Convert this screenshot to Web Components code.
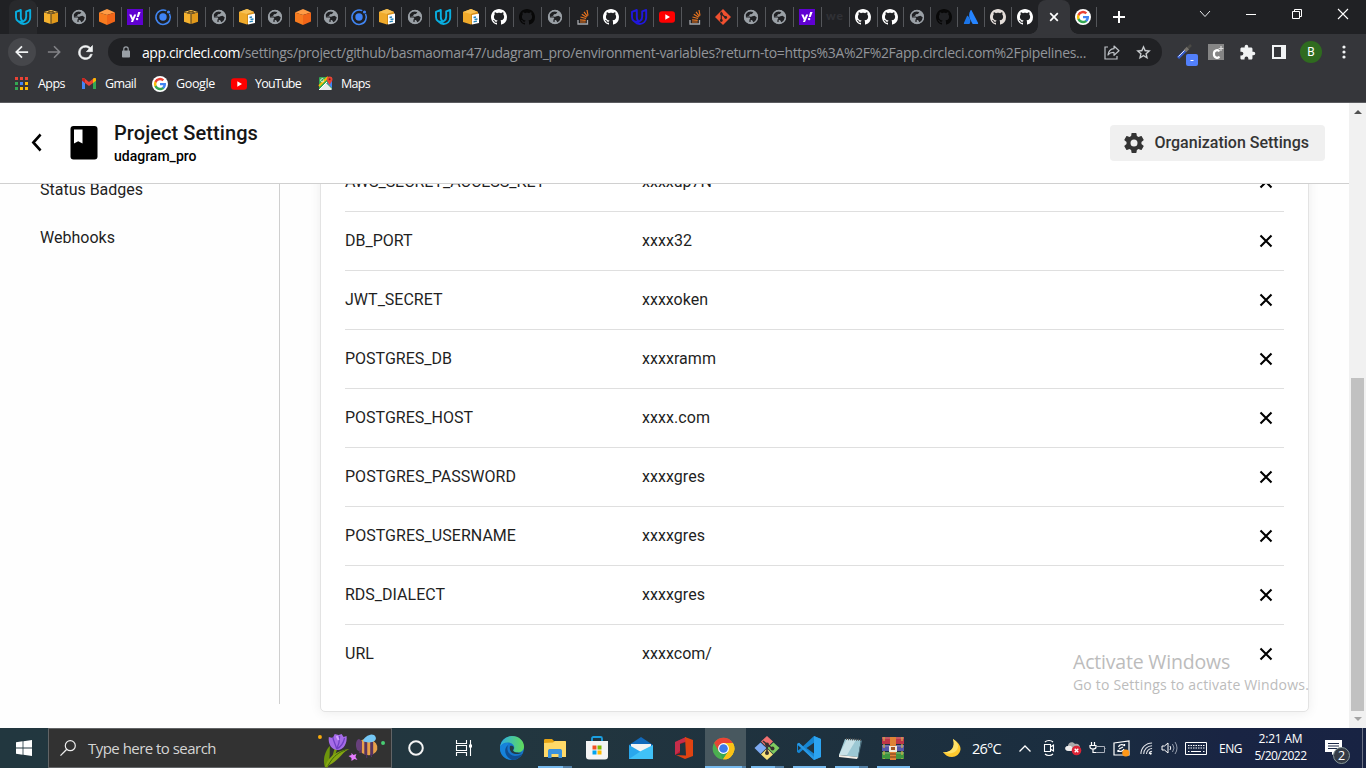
<!DOCTYPE html>
<html lang="en">
<head>
<meta charset="utf-8">
<title>Project Settings - udagram_pro</title>
<style>
html,body{margin:0;height:100%;overflow:hidden;background:#fff}
body{font-family:"Open Sans","Noto Sans",sans-serif}
</style>
</head>
<body>
<desktop-screen></desktop-screen>
<script>
const GH='<path d="M8 0C3.58 0 0 3.58 0 8c0 3.54 2.29 6.53 5.47 7.59.4.07.55-.17.55-.38 0-.19-.01-.82-.01-1.49-2.01.37-2.53-.49-2.69-.94-.09-.23-.48-.94-.82-1.13-.28-.15-.68-.52-.01-.53.63-.01 1.08.58 1.23.82.72 1.21 1.87.87 2.33.66.07-.52.28-.87.51-1.07-1.78-.2-3.64-.89-3.64-3.95 0-.87.31-1.59.82-2.15-.08-.2-.36-1.02.08-2.12 0 0 .67-.21 2.2.82.64-.18 1.32-.27 2-.27s1.36.09 2 .27c1.53-1.04 2.2-.82 2.2-.82.44 1.1.16 1.92.08 2.12.51.56.82 1.27.82 2.15 0 3.07-1.87 3.75-3.65 3.95.29.25.54.73.54 1.48 0 1.07-.01 1.93-.01 2.2 0 .21.15.46.55.38A8.01 8.01 0 0 0 16 8c0-4.42-3.58-8-8-8z" fill="';
const U=c=>`<g fill="none" stroke="${c}" stroke-width="1.9" stroke-linejoin="round"><path d="M1 2.800 5.800 1v7c0 2.300.6 3.700 2.200 4.700C3.500 13.500 1 11.500 1 8z"/><path d="M11.200 2.300 15.200 1v7.500c0 3.800-2.900 6.400-6.700 6.500-2 0-3.500-.7-4.600-2.200 4.500.3 7.300-1.400 7.300-5z"/></g>`;
const G='<path d="M15.500 8.200c0-.6 0-1-.1-1.500H8v2.900h4.200a3.700 3.700 0 0 1-1.600 2.400v2H13c1.600-1.400 2.500-3.500 2.500-5.800z" fill="#4285f4"/><path d="M8 15.800c2.100 0 3.900-.7 5.100-1.900l-2.500-1.900c-.7.5-1.500.7-2.600.7-2 0-3.700-1.300-4.300-3.200H1.100v2A7.800 7.800 0 0 0 8 15.800z" fill="#34a853"/><path d="M3.700 9.500a4.700 4.700 0 0 1 0-3v-2H1.100a7.800 7.800 0 0 0 0 7z" fill="#fbbc05"/><path d="M8 3.300c1.200 0 2.200.4 3 1.200l2.200-2.200A7.800 7.800 0 0 0 1.100 4.500l2.600 2C4.300 4.600 6 3.300 8 3.300z" fill="#ea4335"/>';
const CUBE='<path d="M1 3 8 1l7 2-7 1.500z" fill="#ffc857"/><path d="M1 3.400 7.600 5v10L1 12.700z" fill="#f5b22f"/><path d="M8.400 5 15 3.400v9.300L8.400 15z" fill="#e29a1c"/><path d="M5 2l7 2M11 2 4 4" stroke="#694a14"/>';
const I={
udacity:['16 16',U('#08aee0')],udablue:['16 16',U('#2017dd')],
aws:['16 16',CUBE],
awsdoc:['16 16','<path d="M0 3 8 0l7 3v4H8v8.500L0 13z" fill="#f0aa2b"/><path d="M0 3 8 0l7 3-7 2z" fill="#f7c155"/><path d="M8 5l7-2v10l-7 2.500z" fill="#d68f1b"/><path d="M9 6l7-1.500V14l-7 1.500z" fill="#fff"/><path d="M10.500 8.500l2.500-.5M11.500 10.500l3-.5M10.500 12.800l3.500-.6" stroke="#2684b8" stroke-width="1.300"/>'],
globe:['16 16','<circle cx="8" cy="8" r="7" fill="#9aa0a6"/><path d="M7 2.200 10.400 3 9 5 7 5.200 6 7 3 8 2.500 5.200 4.800 3z M8.500 7.500l3-.7 2.500 1.700-1 3-2.500 2-1.500-2.600-2.500-.4z" fill="#202124"/><path d="M3 8h4l2 2-2 1v2" stroke="#202124" stroke-width="1.200" fill="none"/><circle cx="8" cy="8" r="6.500" fill="none" stroke="#9aa0a6" stroke-width="1.300"/>'],
orange:['16 16','<path d="M0 3.500 8 0l8 3.500L8 6z" fill="#ff9b45"/><path d="M0 3.500 8 6v10l-8-3.500z" fill="#f77b1f"/><path d="M16 3.500 8 6v10l8-3.500z" fill="#f16518"/>'],
yahoo:['16 16','<path d="M0 0h16v16H0z" fill="#6001d2"/><path d="M2.200 5.500h2.200l1.400 3.200 1.300-3.200h2.200L6 13H3.900l.9-2z M11.200 3h2.400l-1.900 5h-2z" fill="#fff"/><circle cx="10.100" cy="10" r="1.200" fill="#fff"/>'],
ionic:['16 16','<circle cx="8" cy="8" r="3.700" fill="#3f83f6"/><path d="M11.300 1.700a7.200 7.200 0 1 0 3.200 3.100" fill="none" stroke="#4186f3" stroke-width="1.500"/><circle cx="13.500" cy="3" r="1.600" fill="#3f83f6"/>'],
github:['16 16',GH+'#fff"/>'],ghblack:['16 16',GH+'#080808"/>'],ghtan:['16 16',GH+'#e4ddd9"/>'],
so:['16 16','<path d="M3 11v4h9.500v-4" fill="none" stroke="#a7a9ad" stroke-width="1.300"/><path d="M5 13h5.700M5 10.800l5.700.5M5.500 8l5.500 1.500M6.800 5.300l4.800 2.900M9 2.800l3.400 4.500M12 1l1 5.500" stroke="#e8741f" stroke-width="1.200"/>'],
youtube:['16 16','<rect y="2.300" width="16" height="11.400" rx="3" fill="#f00"/><path d="M6.300 5.300 11 8l-4.700 2.700z" fill="#fff"/>'],
git:['16 16','<path d="M8 0l8 8-8 8-8-8z" fill="#f0502f"/><path d="M6.300 2.800v9M6.500 5l4 3.500" stroke="#2b2424" stroke-width="1.200"/><circle cx="6.300" cy="11.500" r="1.400" fill="#2b2424"/><circle cx="10.700" cy="8.500" r="1.400" fill="#2b2424"/><circle cx="6.500" cy="5" r="1.400" fill="#2b2424"/>'],
we:['16 16','<text x="-1" y="11" font-family="Lato" font-weight="900" font-size="12" fill="#303136" textLength="17">we</text>'],
atlassian:['16 16','<path d="M5 7c-.3-.4-.8-.3-1 .1L.9 14c-.2.500.1 1 .6 1h4.700c.3 0 .5-.1.600-.4C8 12.200 7.300 9 5 7z" fill="#1b75e8"/><path d="M7.600 1.300C5.700 4.300 5.800 7.600 7 10l2.300 4.600c.1.300.4.400.7.400h4.500c.500 0 .8-.5.600-1L8.500 1.300c-.2-.4-.7-.4-.9 0z" fill="#2684ff"/>'],
google:['16 16','<circle cx="8" cy="8" r="8" fill="#fff"/><g transform="translate(1.600 1.600) scale(.8)">'+G+'</g>'],
back:['16 16','<path d="M15 8H2M8 1.500 1.500 8 8 14.500" fill="none" stroke="#f1f3f4" stroke-width="2"/>'],
forward:['16 16','<path d="M1 8h13M8 1.500 14.500 8 8 14.500" fill="none" stroke="#828387" stroke-width="1.800"/>'],
reload:['24 24','<path d="M17.650 6.350A7.960 7.960 0 0 0 12 4a8 8 0 1 0 7.730 10h-2.080A6 6 0 1 1 12 6c1.660 0 3.140.69 4.220 1.780L13 11h7V4z" fill="#f1f3f4" stroke="#f1f3f4" stroke-width=".7"/>'],
lock:['10 12','<rect x="1" y="4.500" width="8" height="7" rx=".8" fill="#9aa0a6"/><path d="M2.800 5V3a2.200 2.200 0 0 1 4.400 0v2" fill="none" stroke="#9aa0a6" stroke-width="1.200"/>'],
share:['16 16','<path d="M4 3H1v12h12v-3" fill="none" stroke="#bdc1c6" stroke-width="1.200"/><path d="M4 11c.5-4 2.500-6 6-6.300V2l5 4.800-5 4.500V8.500C7.500 8.300 5.500 9 4 11z" fill="none" stroke="#bdc1c6" stroke-width="1.200" stroke-linejoin="round"/>'],
star:['24 24','<path d="M22 9.240l-7.190-.62L12 2 9.190 8.630 2 9.240l5.460 4.730L5.820 21 12 17.270 18.180 21l-1.630-7.030zM12 15.400l-3.760 2.270 1-4.280-3.320-2.880 4.380-.38L12 6.100l1.710 4.040 4.380.38-3.320 2.880 1 4.280z" fill="#d0d3d6" stroke="#d0d3d6" stroke-width=".3"/>'],
pick:['22 22','<path d="M2 14 10 6" stroke="#355dd0" stroke-width="3"/><path d="M2.500 12.500 9 6" stroke="#e4e8f4"/><path d="M9 7l3-3" stroke="#77736c" stroke-width="3.400"/><path d="M12 4l3-3" stroke="#4b4a46" stroke-width="2.500"/><rect x="10" y="10" width="12" height="12" rx="2" fill="#5280fb"/><path d="M14.500 16.500h3" stroke="#fff"/>'],
cext:['16 16','<path d="M0 0h16v16H0z" fill="#858585"/><path d="M11.200 7.400C10.200 5.500 5.900 5.800 5.900 10s4.300 4.600 5.400 2.500" fill="none" stroke="#fff" stroke-width="2.200"/><path d="M13 2v5M10.600 4.500h4.800" stroke="#ddd" stroke-width="1.200"/>'],
puzzle:['24 24','<path d="M20.500 11H19V7c0-1.100-.9-2-2-2h-4V3.500a2.500 2.500 0 0 0-5 0V5H4c-1.100 0-2 .9-2 2v3.800h1.500a2.700 2.700 0 0 1 0 5.400H2V20c0 1.100.9 2 2 2h3.800v-1.500a2.700 2.700 0 0 1 5.400 0V22H17c1.100 0 2-.9 2-2v-4h1.500a2.500 2.500 0 0 0 0-5z" fill="#f1f3f4"/>'],
panel:['14 14','<path d="M1 1h12v12H1z" fill="#35363a" stroke="#f1f3f4" stroke-width="2"/><path d="M9 1h4v12H9z" fill="#f1f3f4"/>'],
dots:['4 16','<circle cx="2" cy="3" r="1.600" fill="#f1f3f4"/><circle cx="2" cy="8" r="1.600" fill="#f1f3f4"/><circle cx="2" cy="13" r="1.600" fill="#f1f3f4"/>'],
close:['10 10','<path d="M1.200 1.200l7.600 7.600M8.800 1.200 1.200 8.800" stroke="#fff" stroke-width="1.700"/>'],
plus:['12 12','<path d="M6 0v12M0 6h12" stroke="#fff" stroke-width="2"/>'],
down:['12 8','<path d="M1 1l5 5.500L11 1" fill="none" stroke="#e8eaed"/>'],
min:['10 10','<path d="M0 5.500h10" stroke="#fff"/>'],
restore:['10 10','<path d="M.5 2.500h7v7h-7zM2.500 2.500v-2h7v7h-2" fill="none" stroke="#fff"/>'],
wclose:['10 10','<path d="M0 0l10 10M10 0 0 10" stroke="#fff" stroke-width="1.100"/>'],
apps:['13 13','<g><path d="M0 0h3v3H0zM5 0h3v3H5zM10 0h3v3h-3z" fill="#ea4335"/><path d="M0 5h3v3H0z" fill="#34a853"/><path d="M5 5h3v3H5z" fill="#4285f4"/><path d="M10 5h3v3h-3z" fill="#fbbc04"/><path d="M0 10h3v3H0z" fill="#34a853"/><path d="M5 10h3v3H5zM10 10h3v3h-3z" fill="#fbbc04"/></g>'],
gmail:['14 11','<path d="M0 1.500V11h3V4.500z" fill="#4285f4"/><path d="M14 1.500V11h-3V4.500z" fill="#34a853"/><path d="M0 1.500C0 0 1.500-.3 2.600.5L7 4 11.400.5C12.500-.3 14 0 14 1.500L11 5 7 8 3 5z" fill="#ea4335"/><path d="M11 1l.4-.5C12.500-.3 14 0 14 1.500v1.300L11 5z" fill="#fbbc04"/><path d="M0 1.500V2.800L3 5V.8C1.500-.3 0 .3 0 1.500z" fill="#c5221f"/>'],
maps:['15 15','<rect x="1" y="1" width="13" height="13" rx="1" fill="#34a853"/><path d="M1 14 8 7l6 6-1 1z" fill="#e9eaec"/><path d="M9 7l5-4v9z" fill="#4285f4"/><path d="M1 10 10 1" stroke="#fbbc04" stroke-width="1.800"/><path d="M1 14 9 6" stroke="#fff"/><path d="M5.600 3.300a1.600 1.600 0 1 0 .1 1.700H4.500" fill="none" stroke="#fff" stroke-width=".8"/><path d="M11.500 9C10.500 6.700 8.700 5.500 8.700 3.300a2.900 2.900 0 0 1 5.800 0C14.500 5.500 12.500 6.700 11.500 9z" fill="#ea4335"/><circle cx="11.600" cy="3.300" r="1" fill="#811c14"/>'],
chev:['12 18','<path d="M10 1.500 2.500 9l7.500 7.500" fill="none" stroke="#000" stroke-width="2.700"/>'],
book:['28 34','<rect x=".5" width="27" height="33.500" rx="3" fill="#000"/><path d="M4 3.500h8.500V17.500L8.200 15.200 4 17.500z" fill="#fff"/>'],
gear:['24 24','<path d="M19.430 12.980c.04-.32.07-.64.07-.98s-.03-.66-.07-.98l2.110-1.650c.19-.15.24-.42.12-.64l-2-3.460c-.12-.22-.39-.3-.61-.22l-2.490 1c-.52-.4-1.080-.73-1.690-.98l-.38-2.650A.49.490 0 0 0 14 2h-4c-.25 0-.46.18-.49.42l-.38 2.650c-.61.25-1.170.59-1.690.98l-2.490-1c-.23-.09-.49 0-.61.22l-2 3.460c-.13.22-.07.49.12.64l2.110 1.650c-.04.32-.07.65-.07.98s.03.66.07.98l-2.110 1.650c-.19.15-.24.42-.12.64l2 3.460c.12.22.39.3.61.22l2.490-1c.52.4 1.080.73 1.690.98l.38 2.650c.03.24.24.42.49.42h4c.25 0 .46-.18.49-.42l.38-2.650c.61-.25 1.170-.59 1.690-.98l2.490 1c.23.09.49 0 .61-.22l2-3.460c.12-.22.07-.49-.12-.64zM12 15.500a3.500 3.500 0 1 1 0-7 3.500 3.500 0 0 1 0 7z" fill="#343434"/>'],
x:['14 14','<path d="M1.500 1.500l11 11M12.500 1.500l-11 11" stroke="#000" stroke-width="2.100"/>'],
win:['16 16','<path d="M0 2.200 6.600 1.300V7.600H0zM7.400 1.200 16 0v7.600H7.400zM0 8.400h6.600v6.300L0 13.800zM7.400 8.400H16V16l-8.600-1.200z" fill="#fff"/>'],
search:['16 16','<circle cx="10.300" cy="5.700" r="5" fill="none" stroke="#eee" stroke-width="1.200"/><path d="M6.800 9.300.5 15.600" stroke="#eee" stroke-width="1.300"/>'],
flower:['70 34','<circle cx="4" cy="4" r="2" fill="#faab0b"/><path d="M10 34C18 26 20 19 21 10" stroke="#79980e" stroke-width="2.500" fill="none"/><path d="M9 34C6 24 11 16 14 13c0 9 0 14-3 21z" fill="#6d950c"/><path d="M9 34c3-9 10-16 25-18-7 2-12 14-25 18z" fill="#85a612"/><path d="M12 33C18 22 24 19 30 17" stroke="#3e6909" fill="none"/><path d="M13 4l4 1 2-4 4 1 3-1 2 3 3-1c1 7-3 14-9 14S12 11 13 4z" fill="#a56be8"/><path d="M17 4c1 5 3 8 4 12M24 3c0 6-1 9-3 13M29 5c-1 5-4 9-8 11" stroke="#7140c5" stroke-width="1.300" fill="none"/><path d="M21 3l2 4" stroke="#d2a3ff" stroke-width="2"/><path d="M36 20l2 2 3-1-1 3 2 3-3-1-3 2v-3l-3-2 3-1z" fill="#e67cff"/><g transform="translate(1.500 0)"><ellipse cx="51" cy="14" rx="10" ry="8" transform="rotate(15 51 14)" fill="#e7a04a"/><path d="M43.500 8v12M49 7v15M55 9v13" stroke="#57345f" stroke-width="3"/><ellipse cx="42" cy="12" rx="3" ry="6" fill="#67407b"/><path d="M46 8c1-4 10-10 13-4 2 5-7 7-13 4z" fill="#75c7f4"/><path d="M50 22v3M54 21l1 3" stroke="#52306f"/></g><circle cx="68" cy="10" r="2" fill="#48cd73"/>'],
cortana:['18 18','<circle cx="9" cy="9" r="6.800" fill="none" stroke="#f4f4f4" stroke-width="2"/>'],
taskview:['16 16','<path d="M.5 0v3.500h10V0M.5 16v-3.500h10V16M.5 5.500h10v5H.5zM14.500 0v16" fill="none" stroke="#fff" stroke-width="1.100"/><path d="M13 4.500h3v3h-3z" fill="#fff"/>'],
edge:['24 24','<defs><linearGradient id="e1" x1="0" x2="1"><stop stop-color="#2daee6"/><stop offset="1" stop-color="#61dc58"/></linearGradient></defs><circle cx="12" cy="12" r="12" fill="#1676ce"/><path d="M0 11C1 4 6 0 12 0c7 0 12 5 12 10.500 0 4-3 6-7 6-3 0-4.500-1-3.500-2.500C16 10 12 6.500 8 6.500 4 6.500 1 8.500 0 11z" fill="url(#e1)"/><path d="M8 9c-5 4-3 12 4.500 15C5 24 0 19 0 12 1 8 5 6.500 8.500 7z" fill="#1683db"/><path d="M8 9c-2 5 1 11 7 11 3 0 5-.8 7.300-2C20 22 16 24 12 24 5 21 3 13 8 9z" fill="#104e91"/><path d="M10 10c-1 4 1 8 6 8 3 0 5-.8 6.600-1.600C21 17 13 17 13 14c2-2 .5-5-3-4z" fill="#243c43"/>'],
explorer:['22 19','<path d="M0 1c0-1 1-1 2-1h6l2 2h12v16H0z" fill="#e6a313"/><path d="M0 4l9-.5L11 2h10l1 1v15H0z" fill="#ffd968"/><path d="M4 19v-7c0-1.500 1-2 2-2h10c1 0 2 .5 2 2v7h-3.500v-4h-7v4z" fill="#3a92dd"/>'],
store:['24 24','<path d="M7 6V2.500C7 1.500 7.500 1 8.500 1h7c1 0 1.500.5 1.500 1.500V6" fill="none" stroke="#1b9fe0" stroke-width="1.800"/><path d="M1 5h22v15.500c0 2-1 3-3 3H4c-2 0-3-1-3-3z" fill="#f4f4f4"/><path d="M7.500 9.500h4v4h-4z" fill="#f25022"/><path d="M12.500 9.500h4v4h-4z" fill="#7fba00"/><path d="M7.500 14.500h4v4h-4z" fill="#00a4ef"/><path d="M12.500 14.500h4v4h-4z" fill="#ffb900"/>'],
mail:['24 22','<path d="M0 8 12 0l12 8v14H0z" fill="#1169bb"/><path d="M2 7h20v6l-10 5L2 13z" fill="#f3f3f3"/><path d="M0 8l24 14H0z" fill="#29a7ec"/><path d="M24 8v14H0l12-8z" fill="#40c1f7"/>'],
office:['18 22','<path d="M0 5 11 0v5L5 7v9l-5 2z" fill="#b51624"/><path d="M0 5 11 0l-.2 4.500L5 6.500V14L0 18z" fill="#d7436f" opacity=".5"/><path d="M10 0l8 3v16l-8 3-9-4 10 .500z" fill="#df4312"/>'],
chrome:['24 24','<circle cx="12" cy="12" r="11.300" fill="#4bae4f"/><path d="M12 12 2.200 6.350A11.300 11.300 0 0 1 21.800 6.350H12z" fill="#ea4335"/><path d="M12 6.350h9.800A11.300 11.300 0 0 1 11.500 23.300L17 15z" fill="#fbc116"/><path d="M2.200 6.350 7.100 14.800 12 12z" fill="#ea4335"/><path d="M7.100 14.800 12 17.700l5-2.900-5.500 8.500z" fill="#34a853"/><path d="M17 14.800 11.500 23.300A11.300 11.300 0 0 0 21.800 6.350H12z" fill="#fbc116"/><circle cx="12" cy="12" r="5.700" fill="#fff"/><circle cx="12" cy="12" r="4.500" fill="#3c79eb"/>'],
gitbash:['24 24','<path d="M12 0l6 5.500-6 6-6-6z" fill="#f07070"/><path d="M5.500 6.500l6 5.500-6 6-6-6z" fill="#7daaf2"/><path d="M18.500 6.500l6 5.500-6 6-6-6z" fill="#80cb60"/><path d="M12 12.500l6 6-6 5.500-6-5.500z" fill="#f6e17b"/><path d="M8 5l4 3.500v8M13 9l4 3.500" stroke="#37302e" stroke-width="1.600" fill="none"/><circle cx="12" cy="8.500" r="2" fill="#37302e"/><circle cx="12" cy="17" r="2" fill="#37302e"/><circle cx="17.500" cy="12.500" r="2" fill="#37302e"/>'],
vscode:['24 24','<path d="M17 0l7 3v18l-7 3L6 13.800l-4 3.400L0 16V8l2-1.200 4 3.400z" fill="#1686d3"/><path d="M17 6.700 9.500 12l7.500 5.500z" fill="#213540"/><path d="M0 8l2-1.200L17 21v3z" fill="#2998e4"/><path d="M1 9.500v5l3-2.500z" fill="#213540"/><path d="M17 0l7 3v18l-7 3z" fill="#2ca4f1"/>'],
notepad:['23 23','<path d="M6 2l16 1-3 17L0 18z" fill="#9cc8d4"/><path d="M8 2l9 1-9 15-8 0z" fill="#d3e9ec" opacity=".8"/><path d="M0 18l19 2-1 2L0 20z" fill="#f4efe7"/><path d="M19 20 22 3l1 1-4 18z" fill="#547887"/><path d="M7 2l15 1" stroke="#555" stroke-dasharray="1 1" stroke-width="2"/>'],
rar:['24 23','<path d="M1 0h22v7H1z" fill="#bd3549"/><path d="M1 8h22v6H1z" fill="#5555aa"/><path d="M1 15h22v7H1z" fill="#3f963f"/><path d="M1 1h22M1 9h22M1 16h22" stroke="#ded2bc" stroke-width="1" opacity=".45"/><path d="M3 0v22M21 0v22" stroke="#d4af4a" stroke-width="1.200" stroke-dasharray="4 3"/><path d="M9 0h6v23H9z" fill="#df8335"/><path d="M8 9h8v6H8z" fill="#f3ead6"/><path d="M10 10h4v3h-4z" fill="#a35624"/><path d="M9 17h6M9 20h6" stroke="#713b1c"/>'],
moon:['18 18','<path d="M10 0c5 3 8 7 7.500 10.500C17 15 13 18 9 18c-4 0-7-2-9-5 7 1 13-4 10-13z" fill="#ffc92e"/><path d="M10 0c5 3 7 8 3 12-3 3-9 3-13 1 7 1 13-4 10-13z" fill="#ffe269"/>'],
up:['12 7','<path d="M.5 6.500 6 1l5.500 5.500" fill="none" stroke="#fff" stroke-width="1.300"/>'],
meet:['12 16','<path d="M1.500 4.500h6v7h-6zM7.500 7l3-2v6l-3-2M2 2c2-2 6-2 8 0M2 14c2 2 6 2 8 0" fill="none" stroke="#fff" stroke-width="1.100"/>'],
cloud:['17 16','<path d="M4 11C-1 11-.5 6 3 6c0-4 5-5 7-2 3-1 5 1 5 4v3z" fill="#aaa"/><path d="M3 6c3-1 5 1 6 5H4C-1 11-.5 6 3 6z" fill="#eee"/><circle cx="11.500" cy="10.500" r="4.800" fill="#dc2436"/><path d="M9.700 8.700l3.600 3.600M13.300 8.700l-3.600 3.600" stroke="#fff" stroke-width="1.300"/>'],
plug:['17 14','<path d="M2.500 1v3M5.500 1v3M1 4.500h6V6C7 7.500 5.500 8 4 8S1 7.500 1 6zM4 8v3.500h3" fill="none" stroke="#fff" stroke-width="1.200"/><path d="M8 5.500h7.500v6H7M15.500 7.500h1" fill="none" stroke="#aab0bb" stroke-width="1"/>'],
sync:['17 17','<path d="M1 3l15-2v14H1z" fill="none" stroke="#fff" stroke-width="1.200"/><path d="M5.500 7c1-3 5-3 6-1V4M11 9c-1 3-5 3-6 1v2M6 9l4-2" fill="none" stroke="#fff" stroke-width="1.300"/><circle cx="12.800" cy="13" r="3.600" fill="#ff9818"/>'],
wifi:['14 14','<path d="M1 13A12 12 0 0 1 13 1M4 13a9 9 0 0 1 9-9M7 13a6 6 0 0 1 6-6M10 13a3 3 0 0 1 3-3" fill="none" stroke="#e4e6eb" stroke-width="1.100"/><circle cx="11.500" cy="12.500" r="1.200" fill="#fff"/>'],
sound:['17 14','<path d="M1 5h2.500L7 2v10L3.500 9H1z" fill="none" stroke="#fff"/><path d="M9 5q1.500 2 0 4" fill="none" stroke="#fff"/><path d="M11.500 3q3 4 0 8M14 1q4 6 0 12" fill="none" stroke="#959dad"/>'],
keyboard:['22 13','<path d="M.5.5h21v12H.5z" fill="none" stroke="#fff"/><path d="M3 3.500h17M3 6h17" stroke="#fff" stroke-width="1.200" stroke-dasharray="1.500 1"/><path d="M3 9.500h1.500M6 9.500h10M18 9.500h1.500" stroke="#fff"/>'],
notice:['17 15','<path d="M0 0h17v12h-6l-4 3v-3H0z" fill="#fff"/><path d="M3 3.500h11M3 6h11M3 8.500h9" stroke="#1a2847"/>']
};
class UiIcon extends HTMLElement{connectedCallback(){
 if(this.shadowRoot)return;
 const [v,b]=I[this.getAttribute('name')];const [a,c]=v.split(' ');
 const w=this.getAttribute('w')||a,h=this.getAttribute('h')||(w*c/a);
 this.attachShadow({mode:'open'}).innerHTML=`<style>:host{display:block;flex:none;width:${w}px;height:${h}px}svg{display:block;overflow:visible}</style><svg width="${w}" height="${h}" viewBox="0 0 ${v}" preserveAspectRatio="none">${b}</svg>`;
}}
/* Single-line label whose tracking is adjusted to the width it is given. */
class FitText extends HTMLElement{connectedCallback(){
 if(this.shadowRoot)return;
 this.attachShadow({mode:'open'}).innerHTML='<style>:host{display:inline-block;white-space:pre;flex:none}</style><slot></slot>';
 const w=+this.getAttribute('w');
 if(w)this.style.letterSpacing=((w-this.getBoundingClientRect().width)/this.textContent.length).toFixed(4)+'px';
}}
const make=(tag,html)=>customElements.define(tag,class extends HTMLElement{connectedCallback(){
 if(this.shadowRoot)return;
 this.attachShadow({mode:'open'}).innerHTML=typeof html==='function'?html(this):html;
}});
make('desktop-screen',`<style>:host{display:flex;flex-direction:column;width:1366px;height:768px;overflow:hidden;position:relative}</style>
<tab-strip></tab-strip><tool-bar></tool-bar><bookmark-bar></bookmark-bar><page-view></page-view><task-bar></task-bar>
<activate-mark></activate-mark>`);
const tabs='udacity aws globe orange yahoo ionic aws globe awsdoc globe orange globe ionic awsdoc globe udacity awsdoc github ghblack globe so github udablue youtube so git globe globe yahoo we github github globe ghblack atlassian ghtan github'.split(' ');
make('tab-item',e=>`<style>:host{display:flex;flex:none;box-sizing:border-box;height:34px;width:28px;align-items:center;justify-content:center;position:relative}
:host([n]){width:27px;padding-right:1px}:host::after{content:"";position:absolute;right:-1px;top:7px;height:20px;width:1px;background:#54565a}
:host([n])::after{right:0}
:host([first]){background:#28292c;border-radius:8px 8px 0 0}:host([last])::after{display:none}</style><slot></slot>`);
make('tab-strip',`<style>:host{display:flex;height:34px;flex:none;background:#202124;padding-left:9px;box-sizing:border-box}
.a{width:32px;height:34px;background:#35363a;border-radius:8px 8px 0 0;display:flex;align-items:center;justify-content:center;margin-left:-1px;position:relative}
.a:before,.a:after{content:"";position:absolute;bottom:0;width:8px;height:8px;left:-8px;background:radial-gradient(circle at 0 0,transparent 7.500px,#35363a 8px)}
.a:after{left:32px;background:radial-gradient(circle at 100% 0,transparent 7.500px,#35363a 8px)}
.p{display:flex;align-items:center;margin-left:16px}.w{margin-left:auto;display:flex;align-items:center;height:28px;margin-right:18px}
</style>${tabs.map((t,i)=>`<tab-item ${i>30?'n':''} ${i?'':'first'} ${i==36?'last':''}><ui-icon name="${t}" w="16"></ui-icon></tab-item>`).join('')}
<div class="a"><ui-icon name="close" w="10"></ui-icon></div><tab-item n><ui-icon name="google" w="16"></ui-icon></tab-item>
<div class="p"><ui-icon name="plus" w="12"></ui-icon></div>
<div class="w"><ui-icon name="down" w="12" style="margin-right:35px"></ui-icon><ui-icon name="min" w="10" style="margin-right:36px"></ui-icon><ui-icon name="restore" w="10" style="margin-right:36px"></ui-icon><ui-icon name="wclose" w="10"></ui-icon></div>`);
make('tool-bar',`<style>:host{display:flex;height:36px;flex:none;background:#35363a;align-items:center;padding-left:8px;box-sizing:border-box}
.b{width:28px;height:28px;border-radius:50%;background:#46474b;display:flex;align-items:center;justify-content:center}
.o{box-sizing:border-box;width:1054px;height:28px;border-radius:14px;background:#202124;margin-left:12px;display:flex;align-items:center;padding:0 10px 0 13px;font-size:14px;color:#92959a;flex:none}
.av{width:22px;height:22px;border-radius:50%;background:#2f6b1f;color:#fff;font:12px Roboto,sans-serif;display:flex;align-items:center;justify-content:center}
</style><div class="b"><ui-icon name="back" w="14"></ui-icon></div><ui-icon name="forward" w="14" style="margin-left:11px"></ui-icon><ui-icon name="reload" w="21" style="margin-left:14px"></ui-icon>
<div class="o"><ui-icon name="lock" w="10"></ui-icon><fit-text w="98" style="color:#fff;margin-left:11px">app.circleci.com</fit-text><fit-text w="846">/settings/project/github/basmaomar47/udagram_pro/environment-variables?return-to=https%3A%2F%2Fapp.circleci.com%2Fpipelines...</fit-text>
<ui-icon name="share" w="16" style="margin-left:18px"></ui-icon><ui-icon name="star" w="17" style="margin-left:15px"></ui-icon></div>
<ui-icon name="pick" w="22" style="margin:5px 0 0 13.500px"></ui-icon><ui-icon name="cext" w="16" style="margin-left:10px"></ui-icon><ui-icon name="puzzle" w="17" style="margin-left:15.500px"></ui-icon><ui-icon name="panel" w="14" style="margin-left:16px"></ui-icon><div class="av" style="margin-left:14px">B</div><ui-icon name="dots" w="4" style="margin-left:19.500px"></ui-icon>`);
make('bookmark-bar',`<style>:host{display:flex;height:33px;flex:none;box-sizing:border-box;background:#35363a;border-bottom:1px solid #5b5c60;align-items:center;padding:0 0 5px 15px;font-size:12.500px;color:#fff}
</style><ui-icon name="apps" w="13"></ui-icon><fit-text w="27" style="margin-left:10px">Apps</fit-text>
<ui-icon name="gmail" w="14" style="margin-left:17px"></ui-icon><fit-text w="31" style="margin-left:9px">Gmail</fit-text>
<ui-icon name="google" w="16" style="margin-left:16px"></ui-icon><fit-text w="39" style="margin-left:8px">Google</fit-text>
<ui-icon name="youtube" w="16" style="margin-left:16px"></ui-icon><fit-text w="46" style="margin-left:8px">YouTube</fit-text>
<ui-icon name="maps" w="15" style="margin-left:17px"></ui-icon><fit-text w="29" style="margin-left:8px">Maps</fit-text>`);
make('page-view',`<style>:host{display:grid;grid-template-columns:1fr 17px;height:625px;flex:none;font-family:Roboto,sans-serif;color:#1f1f1f;background:#fff}
main{height:625px;overflow:hidden}.c{display:flex;height:544px;overflow:hidden;background:#fefefe}</style>
<main><project-header></project-header><div class="c"><side-nav></side-nav><env-card></env-card></div></main><scroll-bar></scroll-bar>`);
make('project-header',`<style>:host{display:flex;height:81px;box-sizing:border-box;border-bottom:1px solid #d0d0d0;align-items:center;padding:0 24px 0 31px;background:#fff;color:#161616}
.t{display:flex;flex-direction:column;margin-left:16px;align-items:flex-start}.h{font-size:20px;font-weight:500;line-height:24px}.s{font-size:14px;font-weight:500;line-height:20px;margin-top:1px;color:#000}
.b{margin-left:auto;margin-top:-1px;box-sizing:border-box;width:215px;height:36px;background:#f0f0f0;border-radius:4px;display:flex;align-items:center;padding-left:12px;font-size:16px;font-weight:500;color:#343434}
</style><ui-icon name="chev" w="11.500" h="19" style="margin-top:-1px"></ui-icon><ui-icon name="book" w="28" h="34" style="margin-left:27.500px"></ui-icon>
<div class="t"><fit-text class="h" w="144">Project Settings</fit-text><fit-text class="s" w="82.500">udagram_pro</fit-text></div>
<div class="b"><ui-icon name="gear" w="24"></ui-icon><fit-text w="154.500" style="margin-left:8.500px">Organization Settings</fit-text></div>`);
make('side-nav',`<style>:host{display:flex;flex-direction:column;width:280px;flex:none;height:520px;box-sizing:border-box;border-right:1px solid #cfcfcf;padding-left:40px;font-size:16px}
div{height:48px;line-height:48px}div:first-of-type{margin-top:-18px}</style><div><fit-text w="103">Status Badges</fit-text></div><div><fit-text w="75">Webhooks</fit-text></div>`);
const rows=[['AWS_SECRET_ACCESS_KEY','xxxxup7N',200,70],['DB_PORT','xxxx32',67.5,50],['JWT_SECRET','xxxxoken',97.5,66],['POSTGRES_DB','xxxxramm',107,74],['POSTGRES_HOST','xxxx.com',128,68],['POSTGRES_PASSWORD','xxxxgres',171,63],['POSTGRES_USERNAME','xxxxgres',171,63],['RDS_DIALECT','xxxxgres',100,63],['URL','xxxxcom/',29,70]];
make('env-row',e=>`<style>:host{display:grid;grid-template-columns:297px 1fr 14px;height:59px;box-sizing:border-box;border-bottom:1px solid #dfdfdf;align-items:center;padding:0 11px 2px 0;font-size:16px}:host([last]){border-color:transparent}ui-icon{margin-top:1px}</style>
<div><fit-text w="${e.getAttribute('kw')}">${e.getAttribute('key')}</fit-text></div><div><fit-text w="${e.getAttribute('vw')}">${e.getAttribute('value')}</fit-text></div><ui-icon name="x" w="14"></ui-icon>`);
make('env-card',`<style>:host{display:block;margin:-60px 0 0 40px;width:989px;height:588px;box-sizing:border-box;border:1px solid #e3e3e3;border-radius:5px;background:#fff;box-shadow:0 1px 12px rgba(0,0,0,.07);padding:28px 24px 0}</style>${rows.map((r,i)=>`<env-row key="${r[0]}" value="${r[1]}" kw="${r[2]}" vw="${r[3]}" ${i==8?'last':''}></env-row>`).join('')}`);
make('scroll-bar',`<style>:host{display:flex;flex-direction:column;align-items:center;background:#f1f1f1;height:625px}
.u,.d{border:4px solid transparent;border-top:0;border-bottom:4px solid #505050;margin-top:7px;width:0}.th{width:13px;height:333px;background:#c1c1c1;margin-top:264px}.d{border-bottom:0;border-top:4px solid #a3a3a3;margin-top:6px}</style><div class="u"></div><div class="th"></div><div class="d"></div>`);
make('activate-mark',`<style>:host{position:absolute;left:1073px;top:648px;display:flex;flex-direction:column;align-items:flex-start;color:#bcbcbc}.a{font-size:19.500px;line-height:28px}.b{font-size:14px;line-height:18px}</style><fit-text class="a" w="157">Activate Windows</fit-text><fit-text class="b" w="236">Go to Settings to activate Windows.</fit-text>`);
make('app-button',`<style>:host{display:flex;flex:none;height:40px;box-sizing:border-box;align-items:center;justify-content:center;position:relative}i{position:absolute;bottom:0;height:2px;left:var(--l,0);width:var(--w,0);background:linear-gradient(90deg,#76b9ed var(--s,100%),#527fa5 var(--s,100%))}</style><slot></slot><i></i>`);
const A=(n,w,iw,st='',ih)=>`<app-button style="width:${w}px;${st}"><ui-icon name="${n}" w="${iw}" ${ih?`h="${ih}"`:''}></ui-icon></app-button>`;
make('task-bar',`<style>:host{display:flex;height:40px;flex:none;background:linear-gradient(90deg,#22373f 0,#22363f 38%,#1d303e 65%,#1a2d40 80%,#192443 90%,#182343 100%);color:#fff}
.s{box-sizing:border-box;width:344px;height:40px;border:1px solid #626466;background:#323232;display:flex;align-items:center;padding-left:11px;color:#d5d5d5;font-size:15px;flex:none}
.t{font-size:14.500px;display:flex;align-items:center;width:49px;padding-left:8px;box-sizing:border-box}
.e{width:37px;display:flex;align-items:center;padding-left:7px;box-sizing:border-box;font-size:12px}.k{width:64px;display:flex;flex-direction:column;align-items:center;font-size:12px;line-height:17px;padding:2px 1px 0 0;box-sizing:border-box}
.n{box-sizing:border-box;padding:12px 0 0 12px;position:relative;border-right:1px solid #6c7284;width:50px}.n b{position:absolute;left:20px;top:19px;width:17px;height:17px;border-radius:50%;background:#343b46;border:1px solid #899;box-sizing:border-box;font:12.500px/15px "Open Sans",sans-serif;text-align:center}
</style>${A('win',48,16)}<div class="s"><ui-icon name="search" w="16"></ui-icon><fit-text w="128" style="margin-left:12px">Type here to search</fit-text><ui-icon name="flower" w="69" h="34" style="margin:3px 0 0 100px"></ui-icon></div>
${A('cortana',48,18)}${A('taskview',47,16,'margin-right:3px')}${A('edge',44,24)}${A('explorer',42,22,'--l:4px;--w:34px;--s:25px')}${A('store',42,24)}${A('mail',46,24)}${A('office',40,18,'margin-right:1px;padding-right:1px')}
${A('chrome',41,23,'background:#48585f;padding-right:4px;--w:41px;--s:37px')}${A('gitbash',41,24,'margin-left:1px;padding-right:2px;--l:4px;--w:33px;--s:24px')}${A('vscode',42,24,'--l:5px;--w:33px')}${A('notepad',42,23,'padding-right:1px;--l:5px;--w:33px;--s:24px')}${A('rar',42,24,'--l:5px;--w:33px')}
<div style="flex:1"></div>${A('moon',24,18)}<div class="t"><fit-text w="29">26°C</fit-text></div>${A('up',24,12)}${A('meet',24,12)}${A('cloud',24,17)}${A('plug',24,17)}${A('sync',25,17)}${A('wifi',24,13)}${A('sound',22,17)}${A('keyboard',32,22)}
<div class="e"><fit-text w="23">ENG</fit-text></div><div class="k"><fit-text w="44">2:21 AM</fit-text><fit-text w="52">5/20/2022</fit-text></div><div class="n"><ui-icon name="notice" w="17"></ui-icon><b>2</b></div><div style="width:3px"></div>`);
customElements.define('ui-icon',UiIcon);
customElements.define('fit-text',FitText);
</script>
</body>
</html>
